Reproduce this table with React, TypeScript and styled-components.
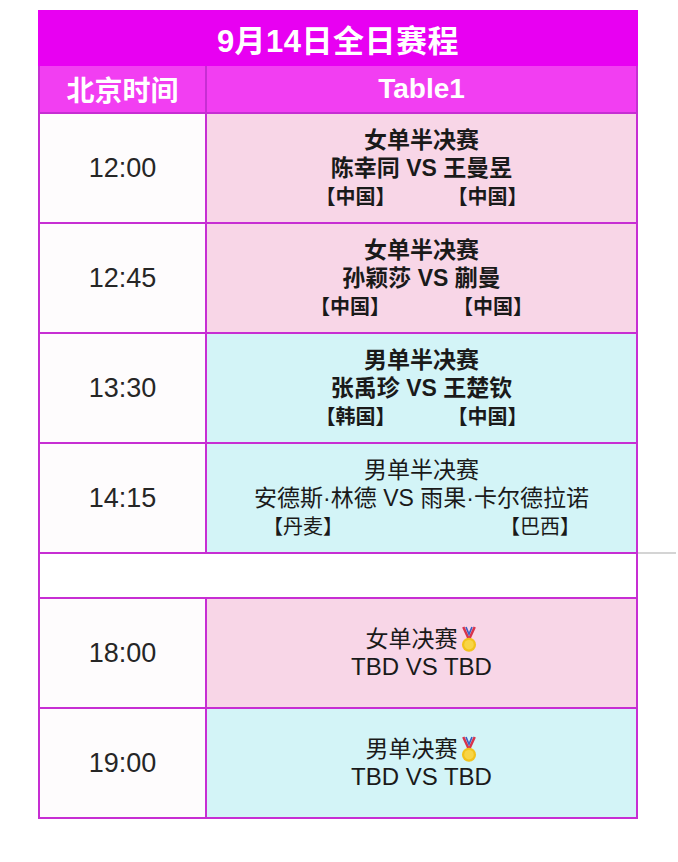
import React from 'react';
import styled, { createGlobalStyle } from 'styled-components';

const GlobalStyle = createGlobalStyle`
  body {
    margin: 0;
    background: #ffffff;
    font-family: "Liberation Sans", "Noto Sans CJK SC", sans-serif;
  }
`;

const Page = styled.div`
  padding: 10px 0 40px 38px;
`;

const Schedule = styled.div`
  width: 600px;
`;

const Title = styled.div`
  height: 56px;
  display: flex;
  align-items: center;
  justify-content: center;
  background: #e800f2;
  color: #ffffff;
  font-size: 31px;
  font-weight: bold;
  letter-spacing: 0.5px;
`;

const Grid = styled.div`
  display: grid;
  grid-template-columns: 165px 429px;
  grid-template-rows: 46px repeat(4, 108px) 43px repeat(2, 108px);
  gap: 2px;
  padding: 0 2px 2px;
  background: #c72ed3;
`;

const HeadCell = styled.div`
  display: flex;
  align-items: center;
  justify-content: center;
  background: #f23ef2;
  color: #ffffff;
  font-size: 28px;
  font-weight: bold;
`;

const TimeCell = styled.div`
  display: flex;
  align-items: center;
  justify-content: center;
  background: #fefcfd;
  color: #262626;
  font-size: 27px;
`;

const MatchCell = styled.div<{ $tone: 'pink' | 'cyan'; $bold?: boolean }>`
  display: flex;
  flex-direction: column;
  align-items: center;
  justify-content: center;
  background: ${(p) => (p.$tone === 'pink' ? '#f8d6e7' : '#d3f4f7')};
  color: #1a1a1a;
  font-weight: ${(p) => (p.$bold ? 'bold' : 'normal')};
`;

const Line = styled.div`
  display: flex;
  align-items: center;
  font-size: 23px;
  line-height: 28px;
  white-space: nowrap;
`;

const Latin = styled.div`
  font-size: 24px;
  line-height: 28px;
`;

const Countries = styled.div<{ $gap: number }>`
  display: flex;
  justify-content: center;
  gap: ${(p) => p.$gap}px;
  font-size: 20px;
  line-height: 28px;
  margin-top: 1px;
`;

const Spacer = styled.div`
  grid-column: 1 / span 2;
  background: #ffffff;
  position: relative;

  &::after {
    content: '';
    position: absolute;
    left: calc(100% + 2px);
    top: -2px;
    width: 38px;
    height: 2px;
    background: #d4d4d4;
  }
`;

const Medal = () => (
  <svg width="18" height="27" viewBox="0 0 17 26" style={{ marginLeft: 2 }}>
    <path d="M3 1 L8.5 13 L14 1" fill="none" stroke="#d8344c" strokeWidth="2.4" />
    <path d="M5.6 1 L8.5 8 L11.4 1" fill="none" stroke="#3d5fc4" strokeWidth="1.6" />
    <circle cx="8.5" cy="18" r="6.8" fill="#f2c21b" />
    <circle cx="8.5" cy="18" r="4.6" fill="#f8d547" />
  </svg>
);

type Match = {
  time: string;
  tone: 'pink' | 'cyan';
  bold?: boolean;
  title: string;
  players?: string;
  latin?: string;
  countries?: [string, string];
  gap?: number;
  medal?: boolean;
};

const semis: Match[] = [
  { time: '12:00', tone: 'pink', bold: true, title: '女单半决赛', players: '陈幸同 VS 王曼昱', countries: ['【中国】', '【中国】'], gap: 52 },
  { time: '12:45', tone: 'pink', bold: true, title: '女单半决赛', players: '孙颖莎 VS 蒯曼', countries: ['【中国】', '【中国】'], gap: 63 },
  { time: '13:30', tone: 'cyan', bold: true, title: '男单半决赛', players: '张禹珍 VS 王楚钦', countries: ['【韩国】', '【中国】'], gap: 52 },
  { time: '14:15', tone: 'cyan', title: '男单半决赛', players: '安德斯·林德 VS 雨果·卡尔德拉诺', countries: ['【丹麦】', '【巴西】'], gap: 157 },
];

const finals: Match[] = [
  { time: '18:00', tone: 'pink', title: '女单决赛', latin: 'TBD VS TBD', medal: true },
  { time: '19:00', tone: 'cyan', title: '男单决赛', latin: 'TBD VS TBD', medal: true },
];

const renderRow = (m: Match) => (
  <React.Fragment key={m.time}>
    <TimeCell>{m.time}</TimeCell>
    <MatchCell $tone={m.tone} $bold={m.bold}>
      <Line>
        {m.title}
        {m.medal && <Medal />}
      </Line>
      {m.players && <Line>{m.players}</Line>}
      {m.latin && <Latin>{m.latin}</Latin>}
      {m.countries && (
        <Countries $gap={m.gap ?? 60}>
          <span>{m.countries[0]}</span>
          <span>{m.countries[1]}</span>
        </Countries>
      )}
    </MatchCell>
  </React.Fragment>
);

const App: React.FC = () => (
  <Page>
    <GlobalStyle />
    <Schedule>
      <Title>9月14日全日赛程</Title>
      <Grid>
        <HeadCell>北京时间</HeadCell>
        <HeadCell>Table1</HeadCell>
        {semis.map(renderRow)}
        <Spacer />
        {finals.map(renderRow)}
      </Grid>
    </Schedule>
  </Page>
);

export default App;
